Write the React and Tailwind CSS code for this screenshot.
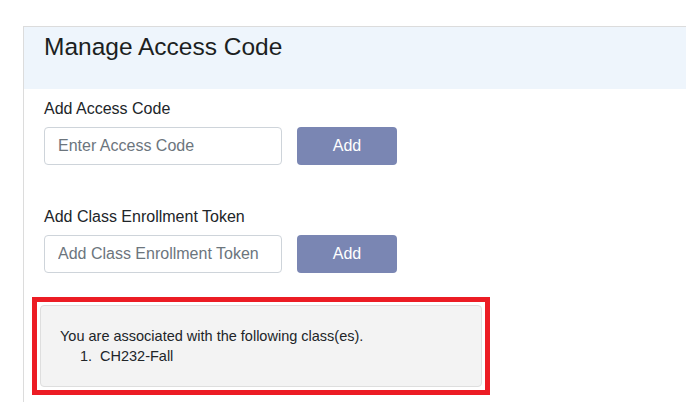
const Field = ({ label, placeholder }) => (
  <div>
    <div className="text-[16px] leading-[22px] text-[#212529]">{label}</div>
    <div className="mt-[7px] flex items-center gap-[15px]">
      <input
        className="h-[38px] w-[238px] rounded-[4px] border border-[#ced4da] bg-white px-[13px] text-[16px] text-[#212529] outline-none placeholder:text-[#6c757d]"
        placeholder={placeholder}
      />
      <button className="h-[38px] w-[100px] rounded-[4px] bg-[#7a86b3] text-[16px] text-white">
        Add
      </button>
    </div>
  </div>
)

const App = () => {
  return (
    <div
      className="h-[402px] w-[686px] overflow-hidden bg-white pl-[23px] pt-[26px]"
      style={{ fontFamily: '"Liberation Sans", Arial, sans-serif' }}
    >
      <div className="h-full border-l border-t border-[#dcdcdc]">
        <div className="h-[62px] bg-[#eef5fc] pl-[20px] pt-[5px]">
          <h3 className="text-[24.5px] leading-[29px] text-[#1c1f22]">Manage Access Code</h3>
        </div>

        <div className="pl-[20px] pt-[9px]">
          <Field label="Add Access Code" placeholder="Enter Access Code" />
          <div className="mt-[41px]">
            <Field label="Add Class Enrollment Token" placeholder="Add Class Enrollment Token" />
          </div>
        </div>

        <div className="ml-[8px] mt-[24px] w-[458px] border-[5px] border-[#ec1c24] p-[3px]">
          <div className="h-[82px] rounded-[4px] border border-[#dedede] bg-[#f3f3f3] pl-[19px] pt-[20px] text-[14.5px] leading-[20px] text-[#212529]">
            <p>You are associated with the following class(es).</p>
            <div className="flex">
              <span className="w-[32px] text-right">1.</span>
              <span className="pl-[8px]">CH232-Fall</span>
            </div>
          </div>
        </div>
      </div>
    </div>
  )
}

export default App
